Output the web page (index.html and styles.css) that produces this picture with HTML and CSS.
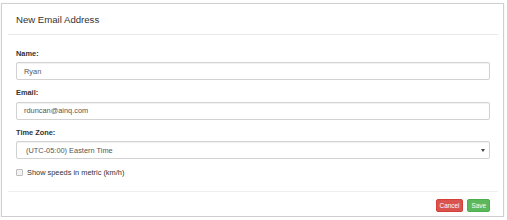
FILE: index.html
```html
<!DOCTYPE html>
<html>
<head>
<meta charset="utf-8">
<link rel="stylesheet" href="styles.css">
</head>
<body>
<div class="modal">
  <div class="modal-inner">
    <div class="modal-header">New Email Address</div>
    <div class="modal-body">
      <div class="form-group">
        <div class="label">Name:</div>
        <div class="input">Ryan</div>
      </div>
      <div class="form-group">
        <div class="label">Email:</div>
        <div class="input">rduncan@ainq.com</div>
      </div>
      <div class="form-group">
        <div class="label">Time Zone:</div>
        <div class="input select"><span>(UTC-05:00) Eastern Time</span><span class="caret"></span></div>
      </div>
      <div class="checkbox-row">
        <span class="checkbox"></span>
        <span class="checkbox-label">Show speeds in metric (km/h)</span>
      </div>
    </div>
    <div class="modal-footer">
      <span class="btn btn-danger">Cancel</span>
      <span class="btn btn-success">Save</span>
    </div>
  </div>
</div>
</body>
</html>
```
FILE: styles.css
```css
html, body {
  margin: 0;
  padding: 0;
  background: #ffffff;
}
body {
  font-family: "Liberation Sans", Arial, sans-serif;
  color: #333333;
}
.modal {
  box-sizing: border-box;
  margin: 3px 0 0 1px;
  width: 503px;
  height: 214px;
  border: 1px solid #cfcfcf;
  box-shadow: 0 1px 2px rgba(0, 0, 0, 0.08);
  background: #fff;
}
.modal-inner {
  padding: 0 5px 0 6px;
}
.modal-header {
  height: 30px;
  display: flex;
  align-items: center;
  padding-left: 8px;
  font-size: 9.6px;
  color: #333;
  border-bottom: 1px solid #e8e8e8;
}
.modal-body {
  padding: 13.5px 8px 0 8px;
}
.form-group {
  margin-bottom: 8px;
}
.label {
  font-size: 7.4px;
  font-weight: bold;
  line-height: 10px;
  height: 10px;
  margin-bottom: 3.5px;
  color: #333;
}
.input {
  box-sizing: border-box;
  height: 18px;
  border: 1px solid #d2d2d2;
  border-radius: 2px;
  box-shadow: inset 0 1px 1px rgba(0, 0, 0, 0.06);
  padding: 0 7px;
  display: flex;
  align-items: center;
  font-size: 7.4px;
  color: #555;
}
.select {
  justify-content: space-between;
  padding: 0 4px 0 9px;
}
.caret {
  width: 0;
  height: 0;
  border-left: 2px solid transparent;
  border-right: 2px solid transparent;
  border-top: 3px solid #444;
  margin-top: 1px;
}
.checkbox-row {
  display: flex;
  align-items: center;
  height: 10px;
}
.checkbox {
  box-sizing: border-box;
  width: 7px;
  height: 7px;
  border: 1px solid #bdbdbd;
  border-radius: 1px;
  background: #f3f3f3;
}
.checkbox-label {
  margin-left: 4px;
  font-size: 7.4px;
  color: #333;
}
.modal-footer {
  margin-top: 14px;
  border-top: 1px solid #efefef;
  padding: 7px 8px 0 8px;
  display: flex;
  justify-content: flex-end;
  gap: 4px;
}
.btn {
  box-sizing: border-box;
  height: 13px;
  padding: 0 3px;
  border-radius: 2px;
  font-size: 6.4px;
  color: #fff;
  display: flex;
  align-items: center;
}
.btn-danger {
  background: #d9534f;
  border: 1px solid #d43f3a;
}
.btn-success {
  background: #5cb85c;
  border: 1px solid #4cae4c;
}
```
